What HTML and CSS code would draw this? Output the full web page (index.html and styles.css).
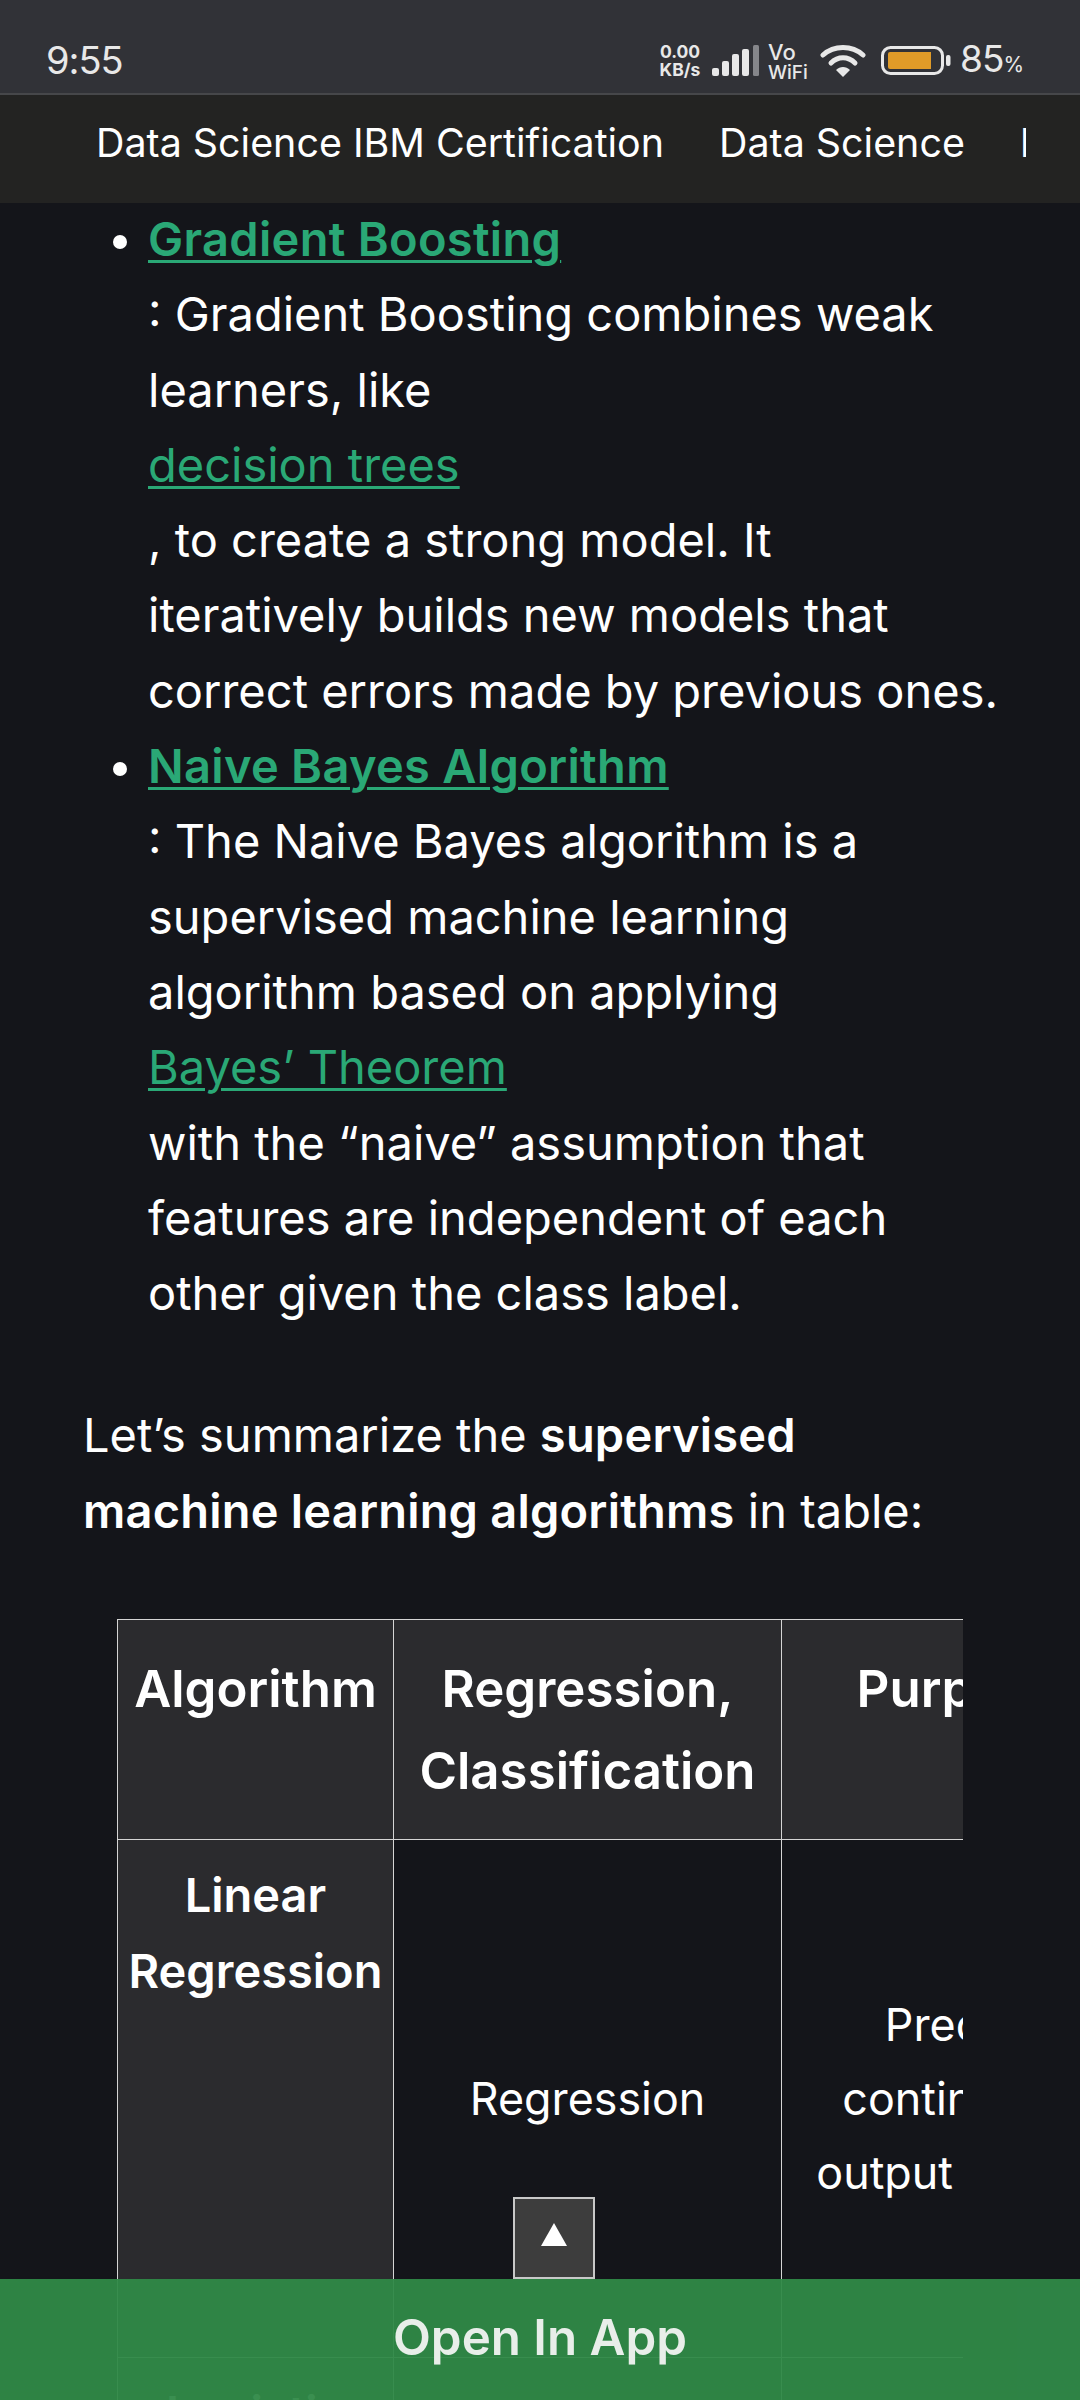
FILE: index.html
```html
<!DOCTYPE html>
<html lang="en">
<head>
<meta charset="utf-8">
<title>Supervised machine learning algorithms</title>
<link rel="stylesheet" href="styles.css">
</head>
<body>
<div class="screen">
  <header class="status">
    <span class="time">9:55</span>
    <div class="status-right">
      <span class="stack speed"><span>0.00</span><span>KB/s</span></span>
      <svg class="signal" width="47" height="31" viewBox="0 0 47 31"><rect x="0" y="23" width="7" height="8" rx="2" fill="#e8e8e8"/><rect x="10" y="16" width="7" height="15" rx="2" fill="#e8e8e8"/><rect x="20" y="9" width="7" height="22" rx="2" fill="#e8e8e8"/><rect x="30" y="4" width="7" height="27" rx="2" fill="#e8e8e8"/><rect x="41" y="0" width="6" height="31" rx="1.5" fill="#85868a"/></svg>
      <span class="stack vowifi"><span class="vo">Vo</span><span>WiFi</span></span>
      <svg class="wifi" width="46" height="33" viewBox="0 0 46 33" fill="none" stroke="#e8e8e8" stroke-width="5" stroke-linecap="round"><path d="M3 11 C14 1 32 1 43 11"/><path d="M11 19 C18 12 28 12 35 19"/><path fill="#e8e8e8" stroke="none" d="M16 26 C20 22 26 22 30 26 L23 33 Z"/></svg>
      <svg class="battery" width="70" height="29" viewBox="0 0 70 29"><rect x="1.5" y="1.5" width="60" height="26" rx="8" fill="none" stroke="#e8e8e8" stroke-width="3"/><path d="M9 6 H50 V23 H9 Q7 23 7 21 V8 Q7 6 9 6 Z" fill="#e09b28"/><rect x="65" y="9" width="4.5" height="11" rx="2" fill="#e8e8e8"/></svg>
      <span class="pct">85<small>%</small></span>
    </div>
  </header>
  <nav class="tabs">
    <div class="tabs-track">
      <span class="tab">Data Science IBM Certification</span>
      <span class="tab">Data Science</span>
      <span class="tab">Data Science Projects</span>
    </div>
  </nav>
  <main class="content">
    <ul class="list">
      <li><a class="link strong" href="#">Gradient Boosting</a><br>: Gradient Boosting combines weak<br>learners, like<br><a class="link" href="#">decision trees</a><br>, to create a strong model. It<br>iteratively builds new models that<br>correct errors made by previous ones.</li>
      <li><a class="link strong" href="#">Naive Bayes Algorithm</a><br>: The Naive Bayes algorithm is a<br>supervised machine learning<br>algorithm based on applying<br><a class="link" href="#">Bayes’ Theorem</a><br>with the “naive” assumption that<br>features are independent of each<br>other given the class label.</li>
    </ul>
    <p class="summary">Let’s summarize the <b>supervised<br>machine learning algorithms</b> in table:</p>
    <div class="table-wrap">
      <table class="algos">
        <colgroup><col class="c1"><col class="c2"><col class="c3"></colgroup>
        <tr class="head"><th>Algorithm</th><th>Regression, Classification</th><th>Purpose</th></tr>
        <tr class="row"><th class="side">Linear Regression</th><td>Regression</td><td>Predict<br>continuous<br>output values</td></tr>
        <tr class="row"><th class="side">Logistic Regression</th><td>Classification</td><td>Predict</td></tr>
      </table>
    </div>
  </main>
  <button class="top-btn" aria-label="Back to top"><span class="tri"></span></button>
  <div class="open-app">Open In App</div>
</div>
</body>
</html>
```
FILE: styles.css
```css
* { box-sizing: border-box; }
html, body { margin: 0; padding: 0; }
body { background: #14151a; font-family: "Inter", "Noto Sans", sans-serif; color: #fff; }
.screen { position: relative; width: 1080px; height: 2400px; overflow: hidden; background: #14151a; }

.status { height: 95px; background: #313237; border-bottom: 2px solid #46474a; display: flex; align-items: flex-start; justify-content: space-between; padding: 39px 59px 0 46px; color: #e8e8e8; }
.time { font-size: 38px; line-height: 42px; letter-spacing: -1px; }
.status-right { display: flex; align-items: center; height: 42px; }
.stack { display: flex; flex-direction: column; }
.speed { width: 46px; font-size: 17.5px; line-height: 18px; font-weight: 700; align-items: center; margin: 2px 9px 0 0; }
.signal { margin-right: 9px; }
.vowifi { width: 42px; font-size: 19px; line-height: 19px; font-weight: 500; margin: 2px 10px 0 0; }
.vo { font-size: 22px; line-height: 22px; }
.wifi { margin-right: 15px; }
.battery { margin-right: 9px; }
.pct { font-size: 37px; line-height: 42px; width: 61px; white-space: nowrap; letter-spacing: -1px; margin-top: 3px; }
.pct small { font-size: 21px; letter-spacing: 0; }

.tabs { height: 108px; background: #232322; padding: 0 54px 12px 96px; display: flex; align-items: center; overflow: hidden; }
.tabs-track { display: flex; gap: 55px; white-space: nowrap; overflow: hidden; font-size: 39.4px; width: 100%; }
.tab { flex: none; }

.content { font-size: 47px; line-height: 75.3px; }
.list { margin: -2px 0 0; padding: 0 24px 0 148px; }
.list li::marker { font-size: 44px; }
.link { color: #2aa876; text-decoration: underline; text-decoration-thickness: 3px; text-underline-offset: 4px; }
.strong { font-weight: 600; letter-spacing: 0.3px; }
.summary { margin: 67px 0 0; padding: 0 40px 0 83px; }
.summary b { font-weight: 600; letter-spacing: 0.2px; }
.table-wrap { margin: 71px 117px 0 117px; overflow: hidden; }
.algos { border-collapse: collapse; table-layout: fixed; width: 1020px; text-align: center; }
.c1 { width: 276px; }
.c2 { width: 388px; }
.c3 { width: 356px; }
.algos th, .algos td { border: 1px solid #d5d5d5; padding: 0 6px; }
.head th { background: #2b2b2e; height: 220px; vertical-align: top; padding-top: 28px; line-height: 82px; font-size: 51px; font-weight: 600; }
.row th, .row td { height: 518px; font-size: 44.8px; line-height: 74px; font-weight: 400; }
.row .side { background: #2b2b2e; vertical-align: top; padding-top: 17px; font-weight: 600; font-size: 47px; line-height: 76px; }

.top-btn { position: absolute; left: 513px; top: 2197px; width: 82px; height: 82px; background: #3d3d3d; border: 2px solid #c8c8c8; padding: 0; display: flex; align-items: center; justify-content: center; }
.tri { display: block; width: 0; height: 0; border-left: 13px solid transparent; border-right: 13px solid transparent; border-bottom: 23px solid #fff; margin-bottom: 8px; }
.open-app { position: absolute; left: 0; right: 0; top: 2279px; height: 121px; background: rgba(47, 137, 71, 0.95); display: flex; align-items: center; justify-content: center; padding-bottom: 5px; font-size: 49.3px; font-weight: 600; color: #e8eee9; }
```
